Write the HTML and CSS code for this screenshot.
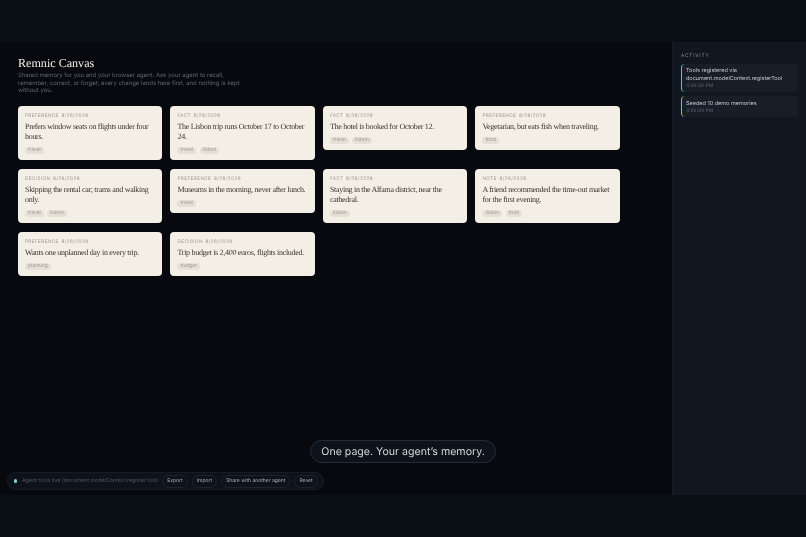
FILE: index.html
```html
<!DOCTYPE html>
<html lang="en">
<head>
<meta charset="utf-8">
<title>Remnic Canvas</title>
<link rel="stylesheet" href="styles.css">
</head>
<body>
<div class="band"></div>
<div class="stage">
  <main class="canvas">
    <header class="intro">
      <h1>Remnic Canvas</h1>
      <p>Shared memory for you and your browser agent. Ask your agent to recall, remember, correct, or forget; every change lands here first, and nothing is kept without you.</p>
    </header>
    <section class="grid">
      <article class="card"><div class="meta"><span>PREFERENCE</span><span>8/26/2026</span></div><p class="body">Prefers window seats on flights under four hours.</p><div class="tags"><span>travel</span></div></article>
      <article class="card"><div class="meta"><span>FACT</span><span>8/26/2026</span></div><p class="body">The Lisbon trip runs October 17 to October 24.</p><div class="tags"><span>travel</span><span>lisbon</span></div></article>
      <article class="card"><div class="meta"><span>FACT</span><span>8/26/2026</span></div><p class="body">The hotel is booked for October 12.</p><div class="tags"><span>travel</span><span>lisbon</span></div></article>
      <article class="card"><div class="meta"><span>PREFERENCE</span><span>8/26/2026</span></div><p class="body">Vegetarian, but eats fish when traveling.</p><div class="tags"><span>food</span></div></article>
      <article class="card"><div class="meta"><span>DECISION</span><span>8/26/2026</span></div><p class="body">Skipping the rental car; trams and walking only.</p><div class="tags"><span>travel</span><span>lisbon</span></div></article>
      <article class="card"><div class="meta"><span>PREFERENCE</span><span>8/26/2026</span></div><p class="body">Museums in the morning, never after lunch.</p><div class="tags"><span>travel</span></div></article>
      <article class="card"><div class="meta"><span>FACT</span><span>8/26/2026</span></div><p class="body">Staying in the Alfama district, near the cathedral.</p><div class="tags"><span>lisbon</span></div></article>
      <article class="card"><div class="meta"><span>NOTE</span><span>8/26/2026</span></div><p class="body">A friend recommended the time-out market for the first evening.</p><div class="tags"><span>lisbon</span><span>food</span></div></article>
      <article class="card"><div class="meta"><span>PREFERENCE</span><span>8/26/2026</span></div><p class="body">Wants one unplanned day in every trip.</p><div class="tags"><span>planning</span></div></article>
      <article class="card"><div class="meta"><span>DECISION</span><span>8/26/2026</span></div><p class="body">Trip budget is 2,400 euros, flights included.</p><div class="tags"><span>budget</span></div></article>
    </section>
    <div class="caption">One page. Your agent’s memory.</div>
    <div class="toolbar">
      <span class="dot"></span>
      <span class="status">Agent tools live (document.modelContext.registerTool)</span>
      <button>Export</button><button>Import</button><button>Share with another agent</button><button>Reset</button>
    </div>
  </main>
  <aside class="activity">
    <h2>ACTIVITY</h2>
    <div class="event teal"><p>Tools registered via document.modelContext.registerTool</p><time>4:36:30 PM</time></div>
    <div class="event amber"><p>Seeded 10 demo memories</p><time>4:36:29 PM</time></div>
  </aside>
</div>
<div class="band"></div>
</body>
</html>
```
FILE: styles.css
```css
* { box-sizing: border-box; }
html, body { margin: 0; height: 100%; overflow: hidden; }
body {
  display: flex;
  flex-direction: column;
  background: #0a0e15;
  font-family: Inter, "Liberation Sans", sans-serif;
  text-rendering: geometricPrecision;
}
.band { flex: 0 0 42px; background: #0a0e15; }
.stage { flex: 0 0 453px; display: flex; background: #07090e; filter: blur(0.3px); }
.canvas { position: relative; flex: 1; min-width: 0; padding: 14px 0 0 18px; }
.intro h1 {
  margin: 0;
  font: 400 12.1px/15px "Liberation Serif", serif;
  color: #f2efe8;
}
.intro p {
  margin: 1px 0 0;
  width: 226px;
  font-size: 5.95px;
  line-height: 7.6px;
  color: #5d6472;
}
.grid {
  margin-top: 11.5px;
  display: grid;
  grid-template-columns: repeat(4, 144.2px);
  column-gap: 8.3px;
  row-gap: 9px;
  align-items: start;
}
.card {
  background: #f3efe6;
  border-radius: 4px;
  padding: 6.5px 7px 6px;
  color: #3a3833;
}
.meta {
  display: flex;
  gap: 2.6px;
  font-size: 4.7px;
  line-height: 6px;
  letter-spacing: 0.38px;
  color: #a09a8e;
}
.body {
  margin: 3px 0 0;
  font: 400 8px/10.2px "Liberation Serif", serif;
  letter-spacing: -0.3px;
  color: #3a3731;
}
.tags { display: flex; gap: 3.3px; margin-top: 5px; }
.tags span {
  background: #e5e0d6;
  border-radius: 4px;
  padding: 0 3px;
  font-size: 4.9px;
  line-height: 7px;
  color: #a09a8e;
}
.caption {
  position: absolute;
  left: 310px;
  top: 398px;
  width: 186px;
  height: 23px;
  border: 1px solid #242c38;
  border-radius: 12px;
  background: #0e131b;
  color: #d3d7dc;
  font-size: 10.6px;
  line-height: 21px;
  text-align: center;
  white-space: nowrap;
}
.toolbar {
  position: absolute;
  left: 7px;
  top: 430px;
  width: 317px;
  height: 18px;
  display: flex;
  align-items: center;
  gap: 4px;
  padding: 0 6px;
  border: 1px solid #161c26;
  border-radius: 9px;
  background: #0e131b;
  white-space: nowrap;
}
.dot { width: 3.4px; height: 3.4px; border-radius: 50%; background: #6fe0cd; flex: none; margin-right: 0.5px; }
.status { font-size: 5.3px; color: #4d5563; }
.toolbar button {
  font: 400 5px/11px Inter, sans-serif;
  text-rendering: geometricPrecision;
  height: 13px;
  padding: 0 4px;
  border: 1px solid #1c232e;
  border-radius: 7px;
  background: #0e131b;
  color: #a5abb4;
}
.activity {
  flex: 0 0 134px;
  background: #111720;
  border-left: 1px solid #161c26;
  padding: 10.5px 8px;
}
.activity h2 {
  margin: 0 0 5.5px;
  font-size: 4.8px;
  line-height: 6px;
  font-weight: 400;
  letter-spacing: 0.8px;
  color: #8b929c;
}
.event {
  margin-bottom: 4px;
  background: #181e28;
  border-left: 1.4px solid;
  border-radius: 4px;
  padding: 4.3px 4px 2.7px;
}
.teal { border-color: #5fc9bb; }
.amber { border-color: #d4a263; }
.event p {
  margin: 0;
  font-size: 5.5px;
  line-height: 7.5px;
  color: #c4c8ce;
}
.event time {
  display: block;
  font-size: 4.9px;
  line-height: 6.5px;
  color: #5b6270;
}
```
